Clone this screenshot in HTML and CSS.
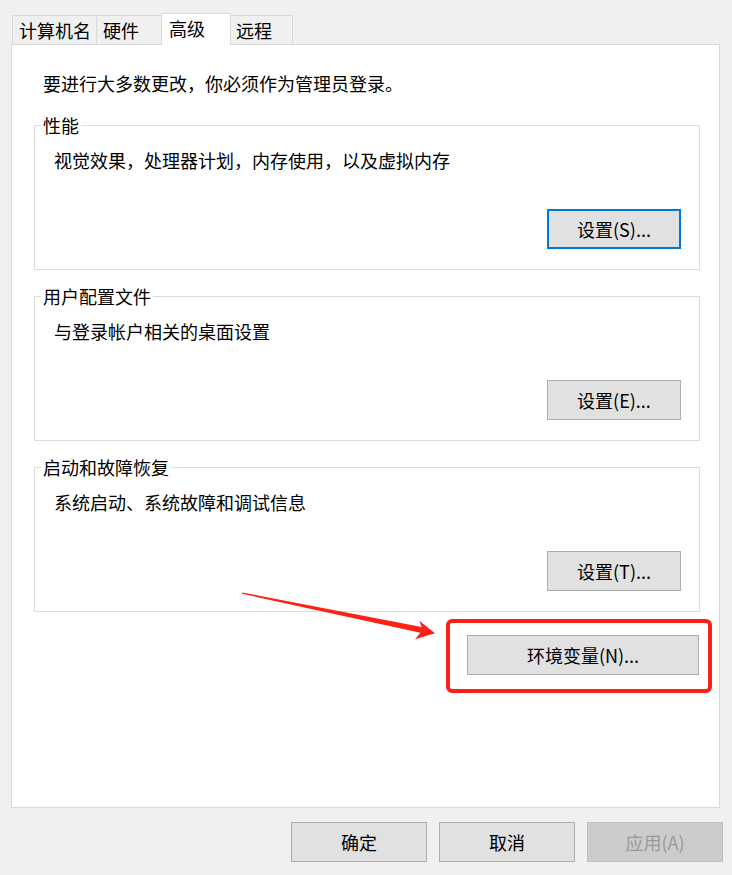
FILE: index.html
```html
<!doctype html>
<html lang="zh-CN">
<head>
    <meta charset="UTF-8">
    <title>系统属性</title>

    <link rel="stylesheet" href="styles.css">
</head>
<body>

<div class="dialog">

    <div class="tabs">
        <div class="tab tab--name">计算机名</div>
        <div class="tab tab--hardware">硬件</div>
        <div class="tab tab--active">高级</div>
        <div class="tab tab--remote">远程</div>
    </div>

    <div class="panel">

        <p class="panel__note">要进行大多数更改，你必须作为管理员登录。</p>

        <fieldset class="group">
            <legend class="group__title">性能</legend>
            <div class="group__body">
                <p class="group__text">视觉效果，处理器计划，内存使用，以及虚拟内存</p>
                <div class="group__actions">
                    <button class="btn btn--group btn--focus">设置(S)...</button>
                </div>
            </div>
        </fieldset>

        <fieldset class="group">
            <legend class="group__title">用户配置文件</legend>
            <div class="group__body">
                <p class="group__text">与登录帐户相关的桌面设置</p>
                <div class="group__actions">
                    <button class="btn btn--group">设置(E)...</button>
                </div>
            </div>
        </fieldset>

        <fieldset class="group">
            <legend class="group__title">启动和故障恢复</legend>
            <div class="group__body">
                <p class="group__text">系统启动、系统故障和调试信息</p>
                <div class="group__actions">
                    <button class="btn btn--group">设置(T)...</button>
                </div>
            </div>
        </fieldset>

        <div class="env-row">
            <div class="env-wrap">
                <span class="highlight"></span>
                <button class="btn btn--env">环境变量(N)...</button>
            </div>
        </div>

        <!-- annotation arrow pointing at the env button -->
        <svg class="arrow" width="200" height="57" viewBox="0 0 200 57">
            <polygon points="2,4.4 181.6,38.9 179.3,32.7 195,45.3 175,51.3 180.4,44.8 2,5.8" fill="#fa2216"/>
        </svg>

    </div>

    <div class="footer">
        <button class="btn btn--footer">确定</button>
        <button class="btn btn--footer">取消</button>
        <button class="btn btn--footer btn--disabled" disabled>应用(A)</button>
    </div>

</div>

</body>
</html>
```

FILE: styles.css
```css
* {
    margin: 0;
    padding: 0;
    box-sizing: border-box;
}

body {
    width: 732px;
    height: 875px;
    overflow: hidden;
    background-color: #f0f0f0;
    font-family: "Noto Sans CJK SC", "Microsoft YaHei", sans-serif;
    font-size: 18px;
    color: #000;
}

.dialog {
    padding-top: 13px;
}

/* tabs */

.tabs {
    display: flex;
    align-items: flex-end;
    height: 31px;
    margin-left: 12px;
}

.tab {
    height: 29px;
    margin-right: -1px;
    padding-left: 6px;
    border: 1px solid #d9d9d9;
    border-bottom: 0;
    background-color: #f0f0f0;
    line-height: 28px;
    white-space: nowrap;
}

.tab--name {
    width: 85px;
}

.tab--hardware {
    width: 66px;
}

.tab--active {
    position: relative;
    z-index: 1;
    width: 70px;
    height: 32px;
    margin-bottom: -1px;
    padding-left: 7px;
    background-color: #fff;
    line-height: 29px;
}

.tab--remote {
    width: 63px;
    padding-left: 5px;
}

/* panel */

.panel {
    position: relative;
    width: 709px;
    height: 764px;
    margin-left: 11px;
    padding: 28px 19px 0 22px;
    border: 1px solid #d9d9d9;
    background-color: #fff;
}

.panel__note {
    margin: 0 0 22px 9px;
    line-height: 20px;
}

.group {
    min-width: 0;
    margin-bottom: 16px;
    border: 1px solid #dcdcdc;
}

.group__title {
    margin-left: 6px;
    padding: 0 2px;
    line-height: 20px;
}

.group__body {
    padding: 15px 18px 20px 19px;
}

.group__text {
    line-height: 20px;
}

.group__actions {
    display: flex;
    justify-content: flex-end;
    margin-top: 39px;
}

.env-row {
    display: flex;
    justify-content: flex-end;
    margin-top: 23px;
    padding-right: 1px;
}

.env-wrap {
    position: relative;
}

.highlight {
    position: absolute;
    left: -21px;
    top: -16px;
    right: -13px;
    bottom: -18px;
    border: 4px solid #fa2216;
    border-radius: 6px;
}

.arrow {
    position: absolute;
    left: 228px;
    top: 543px;
}

/* buttons */

.btn {
    height: 40px;
    border: 1px solid #adadad;
    background-color: #e1e1e1;
    font-family: inherit;
    font-size: 18px;
    color: #000;
    line-height: 20px;
}

.btn--group {
    width: 134px;
}

.btn--focus {
    border: 2px solid #0078d7;
}

.btn--env {
    width: 232px;
}

.footer {
    display: flex;
    justify-content: flex-end;
    gap: 12px;
    padding: 14px 9px 0 0;
}

.btn--footer {
    width: 136px;
}

.btn--disabled {
    border-color: #bfbfbf;
    background-color: #cccccc;
    color: #9a9a9a;
}
```
